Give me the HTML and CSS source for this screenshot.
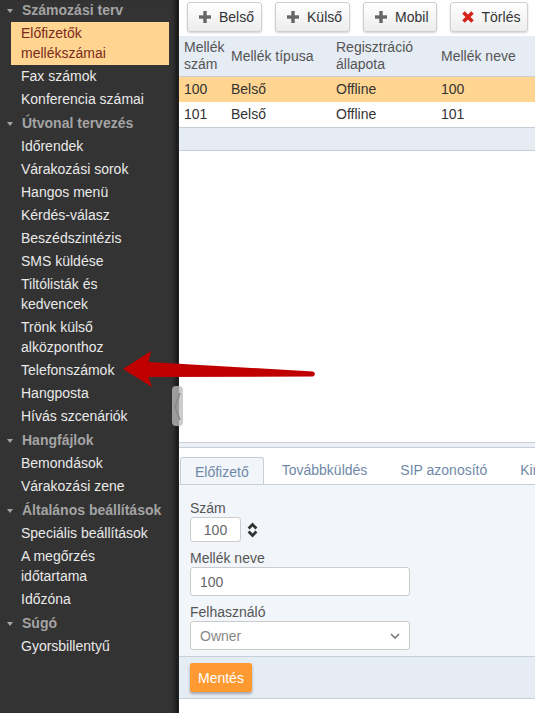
FILE: index.html
```html
<!DOCTYPE html>
<html lang="hu">
<head>
<meta charset="utf-8">
<title>Előfizetők mellékszámai</title>
<link rel="stylesheet" href="styles.css">
</head>
<body>
<div class="app">
  <nav class="sidebar">
    <div class="group">
      <div class="head">Számozási terv</div>
      <div class="item active">Előfizetők mellékszámai</div>
      <div class="item">Fax számok</div>
      <div class="item">Konferencia számai</div>
    </div>
    <div class="group">
      <div class="head">Útvonal tervezés</div>
      <div class="item">Időrendek</div>
      <div class="item">Várakozási sorok</div>
      <div class="item">Hangos menü</div>
      <div class="item">Kérdés-válasz</div>
      <div class="item">Beszédszintézis</div>
      <div class="item">SMS küldése</div>
      <div class="item">Tiltólisták és kedvencek</div>
      <div class="item">Trönk külső alközponthoz</div>
      <div class="item">Telefonszámok</div>
      <div class="item">Hangposta</div>
      <div class="item">Hívás szcenáriók</div>
    </div>
    <div class="group">
      <div class="head">Hangfájlok</div>
      <div class="item">Bemondások</div>
      <div class="item">Várakozási zene</div>
    </div>
    <div class="group">
      <div class="head">Általános beállítások</div>
      <div class="item">Speciális beállítások</div>
      <div class="item">A megőrzés időtartama</div>
      <div class="item">Időzóna</div>
    </div>
    <div class="group">
      <div class="head">Súgó</div>
      <div class="item">Gyorsbillentyű</div>
    </div>
  </nav>

  <main class="main">
    <div class="upper">
      <div class="toolbar">
        <button class="btn"><svg class="ico" viewBox="0 0 12 12"><rect x="0" y="4.3" width="12" height="3.4" fill="#666"/><rect x="4.3" y="0" width="3.4" height="12" fill="#666"/></svg>Belső</button>
        <button class="btn"><svg class="ico" viewBox="0 0 12 12"><rect x="0" y="4.3" width="12" height="3.4" fill="#666"/><rect x="4.3" y="0" width="3.4" height="12" fill="#666"/></svg>Külső</button>
        <button class="btn"><svg class="ico" viewBox="0 0 12 12"><rect x="0" y="4.3" width="12" height="3.4" fill="#666"/><rect x="4.3" y="0" width="3.4" height="12" fill="#666"/></svg>Mobil</button>
        <button class="btn"><svg class="ico" viewBox="0 0 12 12"><path d="M1.5 1.5 L10.5 10.5 M10.5 1.5 L1.5 10.5" stroke="#d3231b" stroke-width="3.6" fill="none"/></svg>Törlés</button>
      </div>
      <table class="grid">
        <colgroup><col class="c1"><col class="c2"><col class="c3"><col></colgroup>
        <thead>
          <tr><th>Mellék szám</th><th>Mellék típusa</th><th>Regisztráció állapota</th><th>Mellék neve</th></tr>
        </thead>
        <tbody>
          <tr class="sel"><td>100</td><td>Belső</td><td>Offline</td><td>100</td></tr>
          <tr><td>101</td><td>Belső</td><td>Offline</td><td>101</td></tr>
        </tbody>
      </table>
      <div class="grid-foot"></div>
    </div>
    <div class="splitter"></div>
    <div class="tabs">
      <div class="tab active">Előfizető</div>
      <div class="tab">Továbbküldés</div>
      <div class="tab">SIP azonosító</div>
      <div class="tab">Kimenő</div>
    </div>
    <div class="panel">
      <label class="lbl">Szám</label>
      <div class="num-row">
        <input class="num" type="text" value="100" readonly>
        <svg class="spin" viewBox="0 0 11 16"><path d="M1.6 6.4 L5.5 2.5 L9.4 6.4 M1.6 9.6 L5.5 13.5 L9.4 9.6" stroke="#333" stroke-width="2.8" fill="none"/></svg>
      </div>
      <label class="lbl gap">Mellék neve</label>
      <input class="field" type="text" value="100" readonly>
      <label class="lbl gap">Felhasználó</label>
      <div class="field select">Owner<svg class="chev" viewBox="0 0 10 6"><path d="M1 1 L5 5 L9 1" stroke="#777" stroke-width="1.6" fill="none"/></svg></div>
    </div>
    <div class="footer">
      <button class="save">Mentés</button>
    </div>
  </main>
</div>

<div class="handle"><svg viewBox="0 0 11 40"><path d="M8 7 L3 21 L8 34" stroke="#8a8a8a" stroke-width="1.6" fill="none"/></svg></div>

<svg class="arrow" viewBox="0 0 535 713">
  <path d="M123 369 L151 351 L148.5 362 L313 371.5 Q317 374 313 376.5 L148.5 377 L152 387 Z" fill="#c00000"/>
</svg>
</body>
</html>
```

FILE: styles.css
```css
html, body {
  margin: 0;
  padding: 0;
}

body {
  width: 535px;
  height: 713px;
  overflow: hidden;
  position: relative;
  font-family: "Liberation Sans", Arial, sans-serif;
  font-size: 14px;
  background: #fff;
}

.app {
  display: flex;
  height: 713px;
}

/* Sidebar */
.sidebar {
  width: 178px;
  flex: none;
  background: #333;
  color: #e9e9e9;
  box-shadow: inset -6px 0 5px -4px #111;
  overflow: hidden;
}

.head {
  position: relative;
  padding: 2px 0 2px 22px;
  line-height: 20px;
  font-weight: bold;
  color: #a4a4a4;
  white-space: nowrap;
}

.head::before {
  content: "";
  position: absolute;
  left: 7px;
  top: 11px;
  border-left: 3px solid transparent;
  border-right: 3px solid transparent;
  border-top: 4px solid #a4a4a4;
}

.group:first-child .head {
  margin-top: -2px;
}

.item {
  margin: 0 9px 0 11px;
  padding: 1px 10px 2px;
  line-height: 20px;
}

.item.active {
  background: #ffd591;
  color: #7a2c1c;
}

/* Main */
.main {
  flex: 1;
  min-width: 0;
  display: flex;
  flex-direction: column;
  border-left: 1px solid #222;
  overflow: hidden;
}

.upper {
  height: 442px;
  flex: none;
  background: #fff;
}

.toolbar {
  height: 36px;
  box-sizing: border-box;
  display: flex;
  gap: 13px;
  padding: 2px 0 0 8px;
}

.btn {
  height: 30px;
  box-sizing: border-box;
  display: flex;
  align-items: center;
  gap: 8px;
  padding: 0 7px 0 11px;
  border: 1px solid #cfcfcf;
  border-radius: 3px;
  background: linear-gradient(#ffffff, #ededed);
  box-shadow: 0 1px 2px rgba(0, 0, 0, 0.18);
  color: #333;
  font: inherit;
}

.ico {
  width: 12px;
  height: 12px;
  flex: none;
}

.grid {
  width: 100%;
  border-collapse: collapse;
  table-layout: fixed;
}

.c1 { width: 48px; }
.c2 { width: 105px; }
.c3 { width: 105px; }

.grid th {
  background: #e5ecf4;
  color: #555;
  font-weight: normal;
  text-align: left;
  padding: 3px 4px;
  line-height: 17px;
  height: 34px;
  border-bottom: 1px solid #c6ced7;
}

.grid td {
  padding: 0 4px;
  height: 25px;
  line-height: 25px;
  color: #333;
  white-space: nowrap;
}

.grid th:first-child,
.grid td:first-child {
  padding-left: 5px;
}

.grid tr.sel td {
  background: #ffd591;
}

.grid-foot {
  height: 22px;
  background: #e5ecf4;
  border-top: 1px solid #c6ced7;
  border-bottom: 1px solid #c6ced7;
}

.splitter {
  height: 6px;
  flex: none;
  box-sizing: border-box;
  background: #ecf0f5;
  border-top: 1px solid #c6ced7;
  border-bottom: 1px solid #c6ced7;
}

/* Tabs */
.tabs {
  height: 37px;
  flex: none;
  box-sizing: border-box;
  display: flex;
  align-items: flex-end;
  gap: 3px;
  padding-left: 1px;
  border-bottom: 1px solid #c6ced7;
  background: #fff;
  white-space: nowrap;
  overflow: hidden;
}

.tab {
  flex: none;
  padding: 0 15px;
  height: 27px;
  line-height: 27px;
  color: #7088a8;
}

.tab.active {
  height: 27px;
  background: #f2f5f9;
  border: 1px solid #c6ced7;
  border-bottom: none;
  border-radius: 3px 3px 0 0;
  margin-bottom: -1px;
  padding: 0 14px;
  line-height: 28px;
}

/* Panel */
.panel {
  flex: none;
  background: #f2f5f9;
  padding: 14px 11px 6px;
  border-bottom: 1px solid #c6ced7;
}

.lbl {
  display: block;
  line-height: 18px;
  color: #555;
}

.lbl.gap {
  margin-top: 7px;
}

.num-row {
  display: flex;
  align-items: center;
  gap: 6px;
}

.num {
  width: 51px;
  height: 25px;
  box-sizing: border-box;
  border: 1px solid #ccc;
  border-radius: 3px;
  background: #fff;
  text-align: center;
  color: #666;
  font: inherit;
  padding: 0;
  margin: 0;
}

.spin {
  width: 11px;
  height: 16px;
}

.field {
  display: block;
  width: 220px;
  height: 29px;
  box-sizing: border-box;
  border: 1px solid #ccc;
  border-radius: 3px;
  background: #fff;
  color: #666;
  font: inherit;
  padding: 0 9px;
  margin: 0;
}

.select {
  display: flex;
  align-items: center;
  justify-content: space-between;
  color: #888;
}

.chev {
  width: 10px;
  height: 6px;
}

/* Footer */
.footer {
  flex: none;
  background: #e5ecf4;
  padding: 6px 11px;
  border-bottom: 1px solid #c6ced7;
}

.save {
  display: block;
  height: 29px;
  padding: 0 8px;
  border: none;
  border-radius: 2px;
  background: #ff9a33;
  color: #fff;
  font: inherit;
  box-shadow: 0 2px 3px rgba(0, 0, 0, 0.3);
}

/* Overlays */
.handle {
  position: absolute;
  left: 172px;
  top: 386px;
  width: 11px;
  height: 40px;
  border-radius: 4px;
  background: rgba(190, 190, 190, 0.78);
}

.handle svg {
  display: block;
  width: 11px;
  height: 40px;
}

.arrow {
  position: absolute;
  left: 0;
  top: 0;
  width: 535px;
  height: 713px;
  pointer-events: none;
}
```
